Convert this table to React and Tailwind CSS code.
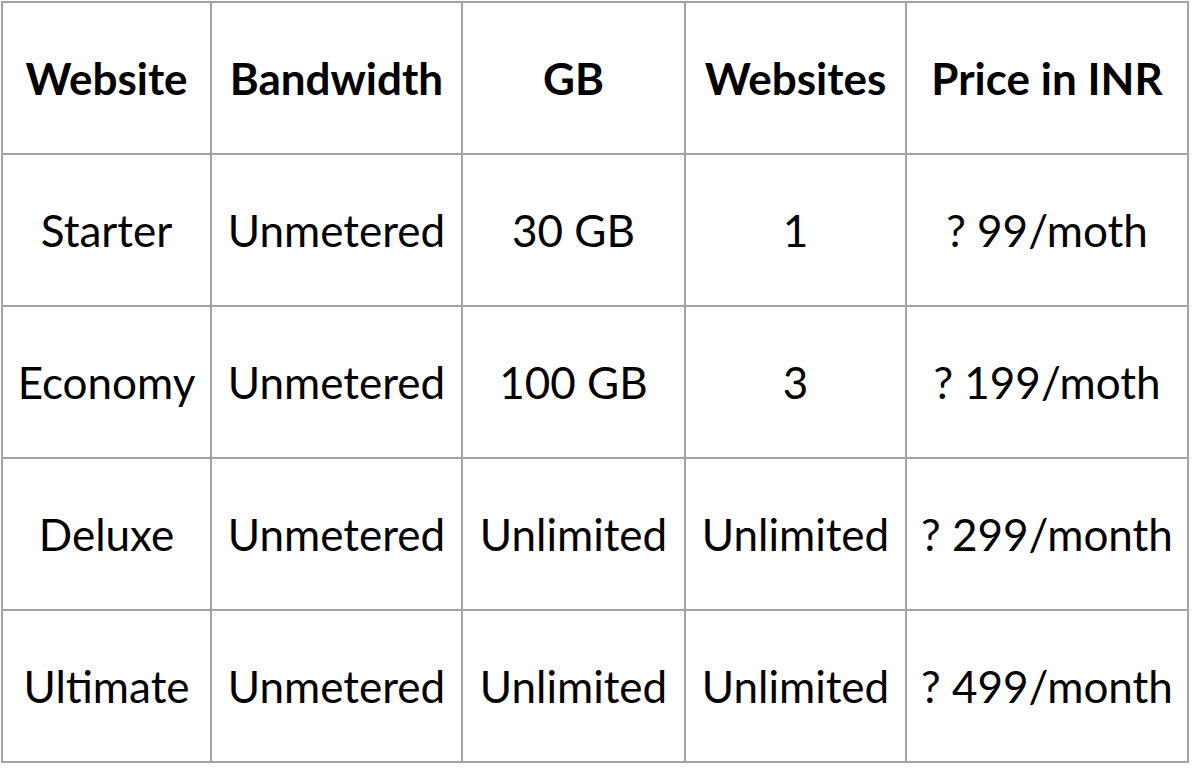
import React from 'react';

const rows = [
  ['Starter', 'Unmetered', '30 GB', '1', '? 99/moth'],
  ['Economy', 'Unmetered', '100 GB', '3', '? 199/moth'],
  ['Deluxe', 'Unmetered', 'Unlimited', 'Unlimited', '? 299/month'],
  ['Ultimate', 'Unmetered', 'Unlimited', 'Unlimited', '? 499/month'],
];

const heads = ['Website', 'Bandwidth', 'GB', 'Websites', 'Price in INR'];

export default function App() {
  return (
    <div className="w-[1200px] h-[780px] bg-white text-black" style={{ fontFamily: 'Lato, "Open Sans", sans-serif' }}>
      <table className="table-fixed border-collapse ml-px mt-px text-[44px] leading-none">
        <colgroup>
          <col className="w-[209px]" />
          <col className="w-[251px]" />
          <col className="w-[223px]" />
          <col className="w-[221px]" />
          <col className="w-[282px]" />
        </colgroup>
        <thead>
          <tr className="h-[152px]">
            {heads.map((h) => (
              <th key={h} className="border-2 border-[#a3a3a3] text-center font-bold p-0 whitespace-nowrap">
                {h}
              </th>
            ))}
          </tr>
        </thead>
        <tbody>
          {rows.map((r) => (
            <tr key={r[0]} className="h-[152px]">
              {r.map((c, i) => (
                <td key={i} className="border-2 border-[#a3a3a3] text-center p-0 whitespace-nowrap">
                  {c}
                </td>
              ))}
            </tr>
          ))}
        </tbody>
      </table>
    </div>
  );
}
